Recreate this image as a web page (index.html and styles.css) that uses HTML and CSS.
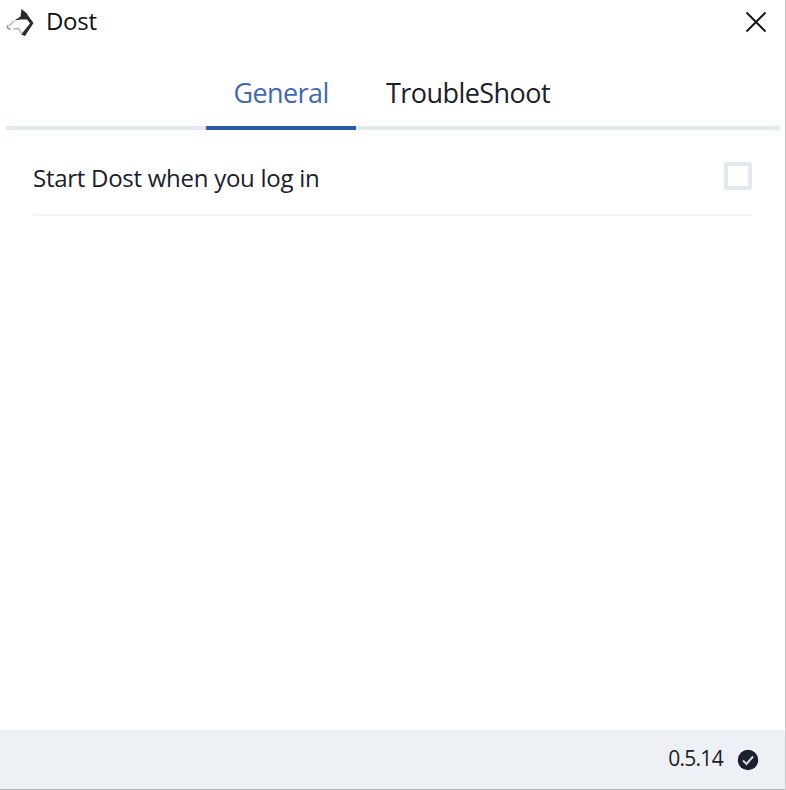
FILE: index.html
```html
<!DOCTYPE html>
<html lang="en">
<head>
<meta charset="utf-8">
<title>Dost</title>
<link rel="stylesheet" href="styles.css">
</head>
<body>
<div class="window">
  <header class="titlebar">
    <svg class="logo" width="30" height="32" viewBox="0 0 30 32">
      <path d="M9.500 14.500L15.500 10.500L16.500 3L22 7.500L23.500 13.500L15.500 13.500Z" fill="#2a2a2a"/>
      <path d="M21.500 7.500L28.500 17L20 30L16 28.500L18.500 25.500L25 17.500L21.500 12.500Z" fill="#2a2a2a"/>
      <path d="M9 15L4 20M8 23L13.500 22.500L17 28" fill="none" stroke="#c4c4c4" stroke-width="1.800"/>
      <path d="M2.500 19L2.500 22L5.500 23.500" fill="none" stroke="#999" stroke-width="1.500"/>
    </svg>
    <span class="title">Dost</span>
    <svg class="close" width="22" height="22" viewBox="0 0 22 22">
      <path d="M1.500 1.500L20.500 20.500M20.500 1.500L1.500 20.500" fill="none" stroke="#1a1a1a" stroke-width="2"/>
    </svg>
  </header>
  <nav class="tabs">
    <div class="tab active"><span class="general">General</span></div>
    <div class="tab other"><span class="trouble">TroubleShoot</span></div>
  </nav>
  <main>
    <label class="setting"><span class="setting-label">Start Dost when you log in</span><span class="checkbox"></span></label>
  </main>
  <footer>
    <span class="version">0.5.14</span>
    <svg width="22" height="22" viewBox="0 0 22 22">
      <circle cx="11" cy="11" r="10.200" fill="#1a202c"/>
      <path d="M6 11.500L9.500 15L16 7.500" fill="none" stroke="#d5dae1" stroke-width="2"/>
    </svg>
  </footer>
</div>
</body>
</html>
```
FILE: styles.css
```css
* { box-sizing: border-box; }
body {
  margin: 0;
  background: #fff;
  color: #1a202c;
  font-family: "Open Sans", "Noto Sans", sans-serif;
  font-weight: 370;
}
.window {
  display: flex;
  flex-direction: column;
  width: 786px;
  height: 790px;
  border-right: 1px solid #c9cacb;
  border-bottom: 1px solid #b5b8bc;
  white-space: nowrap;
}
.titlebar {
  display: flex;
  align-items: center;
  height: 44px;
  padding: 0 18px 0 5px;
}
.title {
  margin-left: 11px;
  padding-bottom: 2px;
  color: #111;
  font-size: 24px;
  line-height: 42px;
  letter-spacing: -0.3px;
}
.close { margin-left: auto; }
.tabs {
  display: flex;
  justify-content: center;
  height: 86px;
  margin: 0 5px 0 6px;
  padding-top: 12px;
  border-bottom: 4px solid #e2e8f0;
}
.tab {
  height: 74px;
  padding: 0 27.5px;
  border-bottom: 4px solid transparent;
  font-size: 27px;
  line-height: 73px;
}
.tab.active { width: 150px; color: #4269ae; border-color: #2b5ca6; }
.tab.other { width: 224px; padding: 0 0 0 30px; }
.general { letter-spacing: -0.6px; }
.trouble { letter-spacing: -0.55px; }
main { flex: 1; padding: 0 33px; }
.setting {
  display: flex;
  align-items: center;
  justify-content: space-between;
  height: 86px;
  padding-top: 8px;
  border-bottom: 2px solid #edf2f7;
}
.setting-label { padding-top: 2px; font-size: 24px; letter-spacing: -0.27px; }
.checkbox {
  width: 28px;
  height: 28px;
  border: 4px solid #e2e8f0;
  border-radius: 3px;
}
footer {
  display: flex;
  align-items: center;
  justify-content: flex-end;
  gap: 14px;
  height: 59px;
  padding-right: 26px;
  background: #edf0f5;
}
.version { padding-bottom: 4px; font-size: 21px; letter-spacing: -0.7px; }
```
